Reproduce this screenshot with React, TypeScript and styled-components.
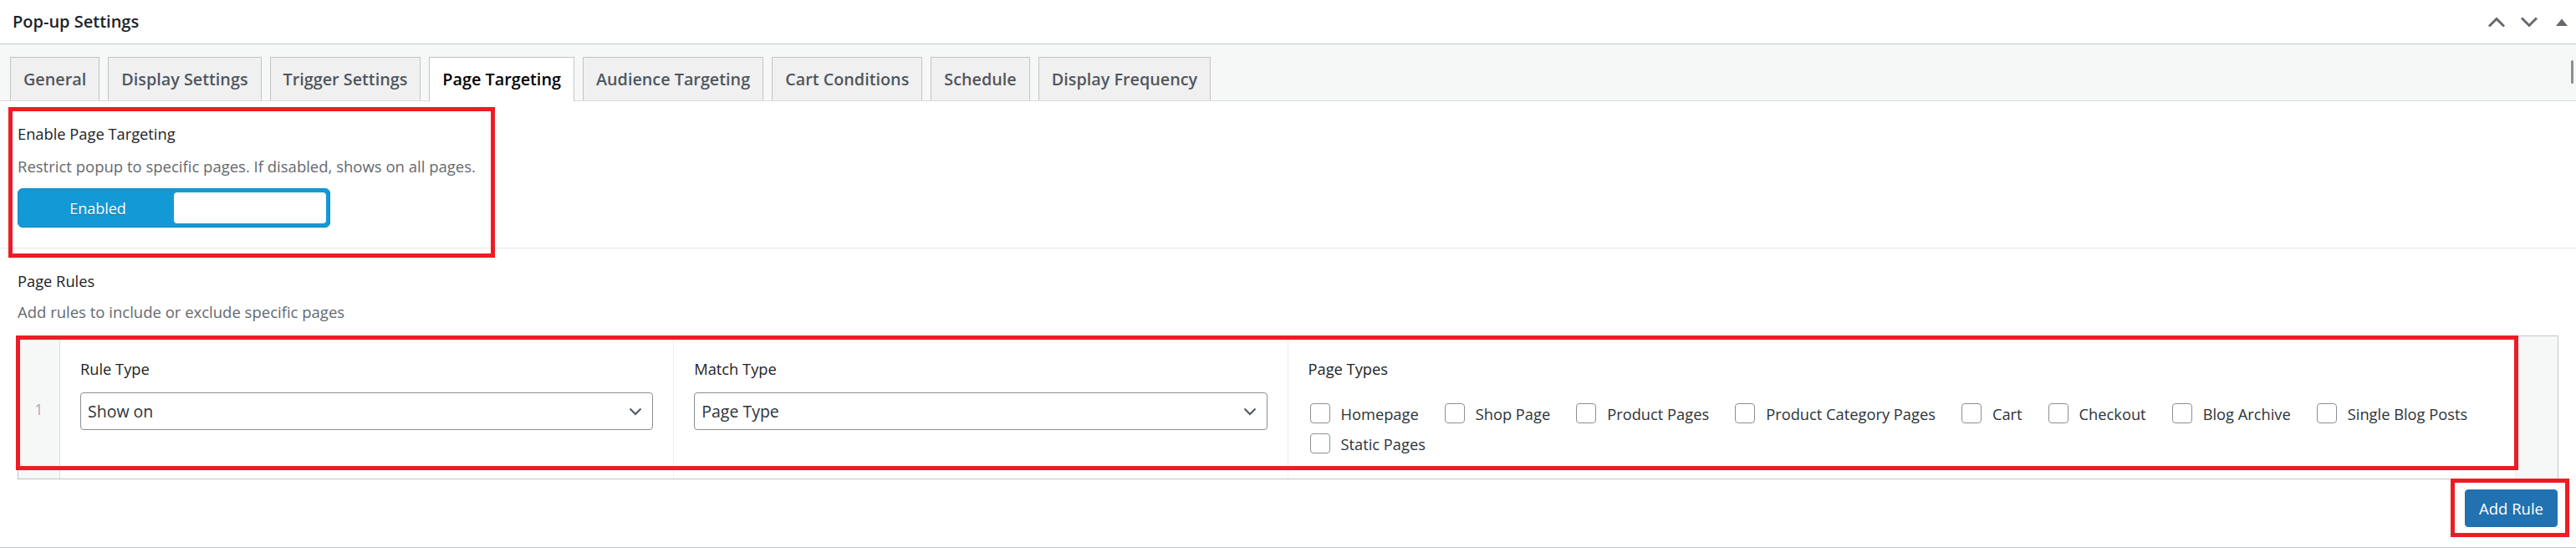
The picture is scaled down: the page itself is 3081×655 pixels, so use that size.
import styled, { createGlobalStyle } from "styled-components";

const GlobalStyle = createGlobalStyle`
  * {
    box-sizing: border-box;
  }
  body {
    margin: 0;
    background: #fff;
    font-family: "Open Sans", "Liberation Sans", sans-serif;
    color: #1d2327;
  }
`;

const Postbox = styled.div`
  position: relative;
  width: 3081px;
  background: #fff;
  border-bottom: 1px solid #c3c4c7;
  overflow: hidden;
`;

const Header = styled.div`
  display: flex;
  align-items: center;
  justify-content: space-between;
  height: 53px;
  padding-left: 15px;
  border-bottom: 1px solid #c3c4c7;
`;

const Title = styled.h2`
  margin: 0;
  font-size: 20px;
  font-weight: 600;
  line-height: 1;
`;

const HandleActions = styled.div`
  display: flex;
  margin-right: -2px;
`;

const HandleButton = styled.span`
  display: flex;
  align-items: center;
  justify-content: center;
  width: 39px;
  height: 52px;
  color: #646970;
`;

const TabBar = styled.nav`
  position: relative;
  display: flex;
  align-items: flex-end;
  gap: 10px;
  height: 68px;
  padding: 15px 0 0 12px;
  background: #f6f7f7;
  border-bottom: 1px solid #dcdcde;
`;

const Tab = styled.div<{ $active?: boolean }>`
  display: flex;
  align-items: center;
  height: ${p => (p.$active ? "53px" : "52px")};
  margin-bottom: ${p => (p.$active ? "-1px" : "0")};
  padding: 0 15px ${p => (p.$active ? "1px" : "0")};
  border: 1px solid #c3c4c7;
  border-bottom: none;
  background: ${p => (p.$active ? "#fff" : "#f0f0f1")};
  color: ${p => (p.$active ? "#000" : "#50575e")};
  font-size: 19.8px;
  font-weight: 600;
  line-height: 1;
  white-space: nowrap;
`;

const ScrollThumb = styled.span`
  position: absolute;
  top: 19px;
  right: 3px;
  width: 3px;
  height: 28px;
  border-radius: 2px;
  background: #8c8f94;
`;

const Section = styled.section<{ $last?: boolean }>`
  display: flex;
  flex-direction: column;
  padding: 26px 21px 24px;
  border-bottom: ${p => (p.$last ? "none" : "1px solid #e6e6e6")};
`;

const FieldLabel = styled.div`
  font-size: 18.3px;
  line-height: 25px;
  color: #1d2327;
`;

const Description = styled.p<{ $gap: number }>`
  margin: ${p => p.$gap}px 0 0;
  font-size: 18.5px;
  line-height: 25px;
  color: #646970;
`;

const Toggle = styled.div`
  display: flex;
  width: 374px;
  height: 47px;
  margin-top: 14px;
  padding: 4px;
  border: 1px solid #0b8bc6;
  border-radius: 6px;
  background: #1399d6;
`;

const ToggleText = styled.span`
  flex: 1;
  display: flex;
  align-items: center;
  justify-content: center;
  color: #fff;
  font-size: 18px;
  text-shadow: 0 1px 0 rgba(0, 0, 0, 0.35);
`;

const ToggleKnob = styled.span`
  width: 182px;
  border-radius: 4px;
  background: #fff;
`;

const RulesTable = styled.div`
  display: grid;
  grid-template-columns: 50px 1fr 1fr 2fr 50px;
  margin-top: 16px;
  border: 1px solid #c3c4c7;
`;

const RowNumber = styled.div`
  display: flex;
  align-items: center;
  justify-content: center;
  padding-top: 4px;
  background: #f6f7f7;
  border-right: 1px solid #dcdcde;
  color: #a7aaad;
  font-size: 18px;
`;

const Cell = styled.div`
  display: flex;
  flex-direction: column;
  padding: 26px 24px 24px;
  border-right: 1px solid #f0f0f1;
`;

const RowActions = styled.div`
  background: #f6f7f7;
`;

const Select = styled.div`
  display: flex;
  align-items: center;
  justify-content: space-between;
  height: 45px;
  margin-top: 16px;
  padding: 0 12px 0 8px;
  border: 1px solid #8c8f94;
  border-radius: 4px;
  background: #fff;
  color: #2c3338;
  font-size: 19.5px;
`;

const CheckList = styled.div`
  display: flex;
  flex-wrap: wrap;
  column-gap: 31px;
  margin-top: 23px;
  padding-left: 2px;
`;

const CheckItem = styled.label`
  display: flex;
  align-items: center;
  gap: 13px;
  height: 36px;
  color: #2c3338;
  font-size: 18.3px;
  white-space: nowrap;
`;

const CheckBox = styled.span`
  width: 24px;
  height: 24px;
  border: 1px solid #8c8f94;
  border-radius: 4px;
  background: #fff;
`;

const Footer = styled.div`
  display: flex;
  justify-content: flex-end;
  margin-top: 12px;
  padding-right: 1px;
`;

const PrimaryButton = styled.button`
  height: 45px;
  padding: 0 16px;
  border: 1px solid #2271b1;
  border-radius: 4px;
  background: #2271b1;
  color: #fff;
  font-family: inherit;
  font-size: 18.5px;
`;

// red frames drawn over the highlighted areas
const Highlight = styled.div<{ $top: number; $left: number; $w: number; $h: number }>`
  position: absolute;
  top: ${p => p.$top}px;
  left: ${p => p.$left}px;
  width: ${p => p.$w}px;
  height: ${p => p.$h}px;
  border: 5px solid #ed1c24;
  pointer-events: none;
`;

const tabs = [
  "General",
  "Display Settings",
  "Trigger Settings",
  "Page Targeting",
  "Audience Targeting",
  "Cart Conditions",
  "Schedule",
  "Display Frequency",
];

const pageTypes = [
  "Homepage",
  "Shop Page",
  "Product Pages",
  "Product Category Pages",
  "Cart",
  "Checkout",
  "Blog Archive",
  "Single Blog Posts",
  "Static Pages",
];

const Chevron = ({ up }: { up?: boolean }) => (
  <svg width="22" height="13" viewBox="0 0 22 13" fill="none">
    <polyline
      points={up ? "2,11.5 11,2.5 20,11.5" : "2,1.5 11,10.5 20,1.5"}
      stroke="currentColor"
      strokeWidth="3"
    />
  </svg>
);

const SelectArrow = () => (
  <svg width="16" height="10" viewBox="0 0 16 10" fill="none">
    <polyline points="1.5,1.5 8,8 14.5,1.5" stroke="#50575e" strokeWidth="2" />
  </svg>
);

export default function App() {
  return (
    <>
      <GlobalStyle />
      <Postbox>
        <Header>
          <Title>Pop-up Settings</Title>
          <HandleActions>
            <HandleButton>
              <Chevron up />
            </HandleButton>
            <HandleButton>
              <Chevron />
            </HandleButton>
            <HandleButton>
              <svg width="14" height="9" viewBox="0 0 14 9">
                <polygon points="0,9 7,0.5 14,9" fill="currentColor" />
              </svg>
            </HandleButton>
          </HandleActions>
        </Header>

        <TabBar>
          {tabs.map(t => (
            <Tab key={t} $active={t === "Page Targeting"}>
              {t}
            </Tab>
          ))}
          <ScrollThumb />
        </TabBar>

        <Section>
          <FieldLabel>Enable Page Targeting</FieldLabel>
          <Description $gap={14}>
            Restrict popup to specific pages. If disabled, shows on all pages.
          </Description>
          <Toggle>
            <ToggleText>Enabled</ToggleText>
            <ToggleKnob />
          </Toggle>
        </Section>

        <Section $last>
          <FieldLabel>Page Rules</FieldLabel>
          <Description $gap={12}>
            Add rules to include or exclude specific pages
          </Description>
          <RulesTable>
            <RowNumber>1</RowNumber>
            <Cell>
              <FieldLabel>Rule Type</FieldLabel>
              <Select>
                Show on
                <SelectArrow />
              </Select>
            </Cell>
            <Cell>
              <FieldLabel>Match Type</FieldLabel>
              <Select>
                Page Type
                <SelectArrow />
              </Select>
            </Cell>
            <Cell>
              <FieldLabel>Page Types</FieldLabel>
              <CheckList>
                {pageTypes.map(p => (
                  <CheckItem key={p}>
                    <CheckBox />
                    {p}
                  </CheckItem>
                ))}
              </CheckList>
            </Cell>
            <RowActions />
          </RulesTable>
          <Footer>
            <PrimaryButton>Add Rule</PrimaryButton>
          </Footer>
        </Section>

        <Highlight $top={128} $left={10} $w={582} $h={180} />
        <Highlight $top={401} $left={19} $w={2993} $h={161} />
        <Highlight $top={572} $left={2931} $w={142} $h={70} />
      </Postbox>
    </>
  );
}
